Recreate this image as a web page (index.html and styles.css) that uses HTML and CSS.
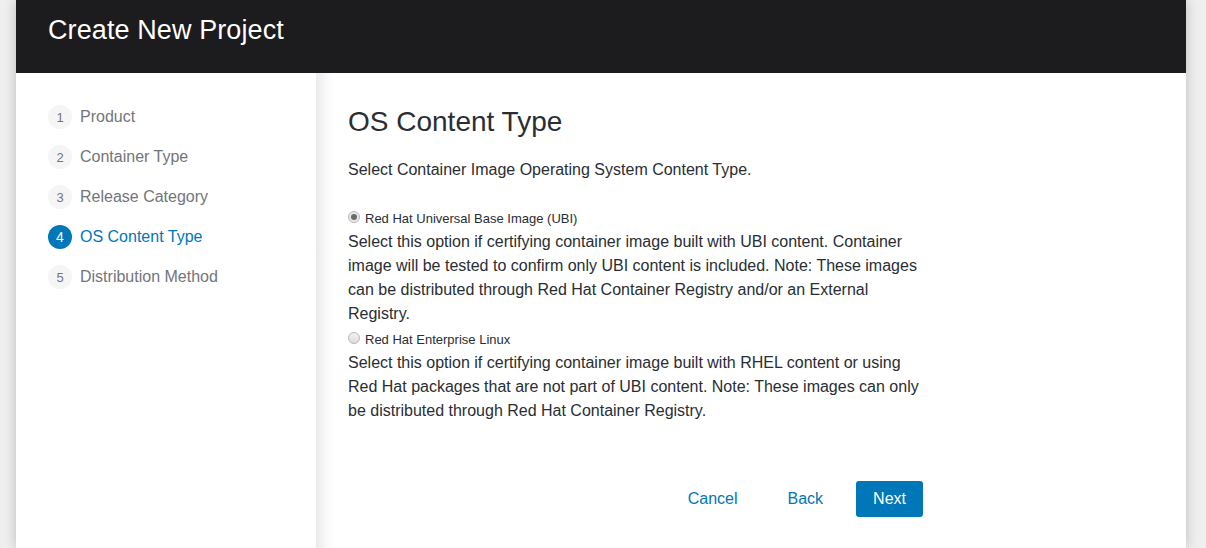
FILE: index.html
```html
<!DOCTYPE html>
<html lang="en">
<head>
<meta charset="utf-8">
<title>Create New Project</title>
<link rel="stylesheet" href="styles.css">
</head>
<body>
<div class="modal">
  <header class="modal-header">
    <h1 class="modal-title">Create New Project</h1>
  </header>
  <div class="wizard">
    <nav class="steps">
      <ol class="step-list">
        <li class="step"><span class="step-num">1</span><span class="step-label">Product</span></li>
        <li class="step"><span class="step-num">2</span><span class="step-label">Container Type</span></li>
        <li class="step"><span class="step-num">3</span><span class="step-label">Release Category</span></li>
        <li class="step step-active"><span class="step-num">4</span><span class="step-label">OS Content Type</span></li>
        <li class="step"><span class="step-num">5</span><span class="step-label">Distribution Method</span></li>
      </ol>
    </nav>
    <main class="content">
      <div class="content-inner">
        <h2 class="content-title">OS Content Type</h2>
        <p class="lead">Select Container Image Operating System Content Type.</p>
        <div class="options">
          <label class="option">
            <span class="radio radio-checked"></span>
            <span class="option-label">Red Hat Universal Base Image (UBI)</span>
          </label>
          <p class="option-desc">Select this option if certifying container image built with UBI content. Container image will be tested to confirm only UBI content is included. Note: These images can be distributed through Red Hat Container Registry and/or an External Registry.</p>
          <label class="option option-next">
            <span class="radio"></span>
            <span class="option-label">Red Hat Enterprise Linux</span>
          </label>
          <p class="option-desc">Select this option if certifying container image built with RHEL content or using Red Hat packages that are not part of UBI content. Note: These images can only be distributed through Red Hat Container Registry.</p>
        </div>
        <div class="actions">
          <button class="btn btn-link" type="button">Cancel</button>
          <button class="btn btn-link" type="button">Back</button>
          <button class="btn btn-primary" type="button">Next</button>
        </div>
      </div>
    </main>
  </div>
</div>
</body>
</html>
```
FILE: styles.css
```css
* { box-sizing: border-box; }
html, body { height: 100%; }
body {
  margin: 0;
  background: #efefef;
  font-family: "Liberation Sans", Arial, sans-serif;
  overflow: hidden;
}
.modal {
  margin: 0 20px 0 16px;
  height: 100%;
  background: #fff;
  display: flex;
  flex-direction: column;
  box-shadow: 0 0 12px rgba(0, 0, 0, 0.22);
}
.modal-header {
  height: 73px;
  flex: none;
  background: #1c1b1d;
  padding: 14px 32px 0;
}
.modal-title {
  margin: 0;
  font-weight: 300;
  font-size: 27px;
  line-height: 32px;
  color: #fff;
  letter-spacing: 0.1px;
}
.wizard {
  flex: 1;
  display: flex;
}
.steps {
  width: 300px;
  flex: none;
  background: #fff;
  padding-top: 24px;
}
.step-list {
  list-style: none;
  margin: 0;
  padding: 0 0 0 32px;
}
.step {
  height: 40px;
  display: flex;
  align-items: center;
  gap: 8px;
}
.step-num {
  width: 24px;
  height: 24px;
  border-radius: 50%;
  background: #f5f5f5;
  color: #72767b;
  font-size: 13px;
  display: flex;
  align-items: center;
  justify-content: center;
}
.step-label {
  font-size: 16px;
  color: #72767b;
}
.step-active .step-num {
  background: #0077b8;
  color: #fff;
  font-size: 14px;
}
.step-active .step-label { color: #0077b8; }
.content {
  flex: 1;
  background: linear-gradient(to right, #ebebeb 0, #fbfbfb 12px, #fff 20px);
  padding: 31px 32px 0;
}
.content-inner { width: 575px; }
.content-title {
  margin: 0;
  font-size: 28px;
  font-weight: 300;
  color: #292e34;
  line-height: 36px;
}
.lead {
  margin: 18px 0 0;
  font-size: 16px;
  line-height: 24px;
  color: #292e34;
}
.options { margin-top: 24px; }
.option {
  display: flex;
  align-items: center;
  gap: 5px;
  height: 24px;
}
.option-next { margin-top: 1px; }
.radio {
  width: 12px;
  height: 12px;
  border-radius: 50%;
  border: 1px solid #b8b8b8;
  background: linear-gradient(#f2f2f2, #dcdcdc);
  display: inline-block;
  position: relative;
  margin-top: -2px;
}
.radio-checked {
  background: #e8e8e8;
}
.radio-checked::after {
  content: "";
  position: absolute;
  left: 2px;
  top: 2px;
  width: 6px;
  height: 6px;
  border-radius: 50%;
  background: #6b6b6b;
}
.option-label {
  font-size: 13px;
  color: #292e34;
}
.option-desc {
  margin: 0;
  font-size: 16px;
  line-height: 24px;
  color: #292e34;
}
.actions {
  margin-top: 58px;
  display: flex;
  justify-content: flex-end;
  gap: 16px;
}
.btn {
  height: 36px;
  padding: 0 16px;
  border: 1px solid transparent;
  border-radius: 3px;
  font-family: inherit;
  font-size: 16px;
  background: transparent;
  cursor: pointer;
}
.btn-link { color: #0077b8; }
.btn-primary {
  background: #0077b8;
  color: #fff;
}
```
